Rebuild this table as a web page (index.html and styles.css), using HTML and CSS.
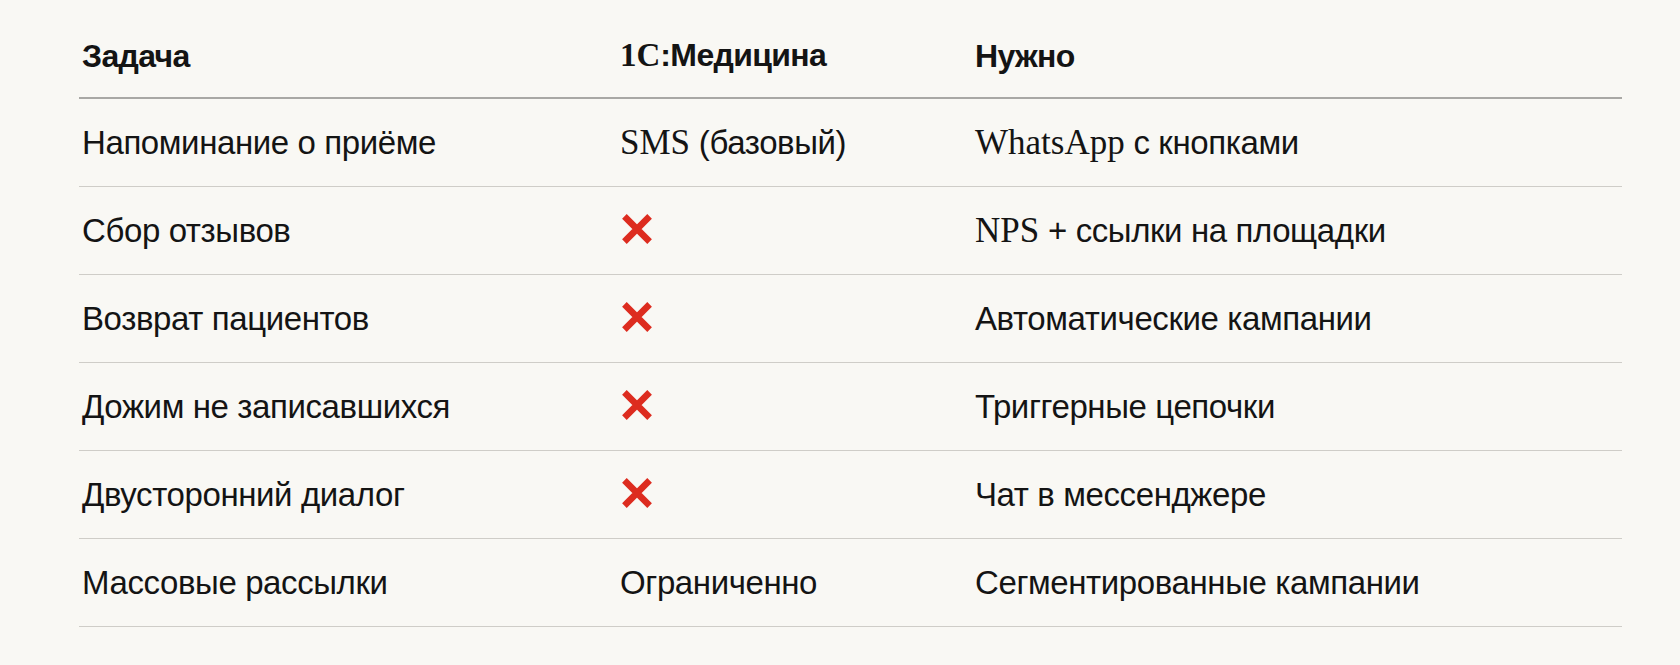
FILE: index.html
```html
<!DOCTYPE html>
<html lang="ru">
<head>
<meta charset="utf-8">
<title>Сравнение</title>
<link rel="stylesheet" href="styles.css">
</head>
<body>
<div class="page">
  <div class="table">
    <div class="row head">
      <div class="cell">Задача</div>
      <div class="cell"><span class="lat">1C</span>:Медицина</div>
      <div class="cell">Нужно</div>
    </div>
    <div class="row">
      <div class="cell">Напоминание о приёме</div>
      <div class="cell"><span class="lat">SMS</span> (базовый)</div>
      <div class="cell"><span class="lat">WhatsApp</span> с кнопками</div>
    </div>
    <div class="row">
      <div class="cell">Сбор отзывов</div>
      <div class="cell"><svg class="cross" viewBox="0 0 30 30" aria-label="нет"><path d="M2.4 2.4 L27.6 27.6 M27.6 2.4 L2.4 27.6"/></svg></div>
      <div class="cell"><span class="lat">NPS</span> + ссылки на площадки</div>
    </div>
    <div class="row">
      <div class="cell">Возврат пациентов</div>
      <div class="cell"><svg class="cross" viewBox="0 0 30 30" aria-label="нет"><path d="M2.4 2.4 L27.6 27.6 M27.6 2.4 L2.4 27.6"/></svg></div>
      <div class="cell">Автоматические кампании</div>
    </div>
    <div class="row">
      <div class="cell">Дожим не записавшихся</div>
      <div class="cell"><svg class="cross" viewBox="0 0 30 30" aria-label="нет"><path d="M2.4 2.4 L27.6 27.6 M27.6 2.4 L2.4 27.6"/></svg></div>
      <div class="cell">Триггерные цепочки</div>
    </div>
    <div class="row">
      <div class="cell">Двусторонний диалог</div>
      <div class="cell"><svg class="cross" viewBox="0 0 30 30" aria-label="нет"><path d="M2.4 2.4 L27.6 27.6 M27.6 2.4 L2.4 27.6"/></svg></div>
      <div class="cell">Чат в мессенджере</div>
    </div>
    <div class="row">
      <div class="cell">Массовые рассылки</div>
      <div class="cell">Ограниченно</div>
      <div class="cell">Сегментированные кампании</div>
    </div>
  </div>
</div>
</body>
</html>
```

FILE: styles.css
```css
html, body {
  margin: 0;
  padding: 0;
  background: #f9f8f4;
}

body {
  font-family: "Liberation Sans", Arial, sans-serif;
  color: #141414;
}

.page {
  padding: 11px 0 0 79px;
}

.table {
  width: 1543px;
}

.row {
  display: grid;
  grid-template-columns: 541px 355px 1fr;
  align-items: center;
  height: 88px;
  box-sizing: border-box;
  border-bottom: 1px solid #cfcdc8;
  font-size: 33px;
  letter-spacing: -0.012em;
}

.row.head {
  border-bottom: 2px solid #a9a8a5;
  font-size: 32px;
  font-weight: 700;
  letter-spacing: -0.02em;
}

.cell {
  line-height: 1.2;
  white-space: nowrap;
}

.cell:first-child {
  padding-left: 3px;
}

.head .cell {
  padding-top: 4px;
}

.lat {
  font-family: "Liberation Serif", "Times New Roman", serif;
  font-size: 35px;
  letter-spacing: 0;
}

.head .lat {
  font-size: 33px;
}

.cross {
  display: block;
  width: 30px;
  height: 30px;
  margin-left: 2px;
  margin-top: -3px;
}

.cross path {
  stroke: #dd2c1f;
  stroke-width: 6.5;
  fill: none;
}
```
